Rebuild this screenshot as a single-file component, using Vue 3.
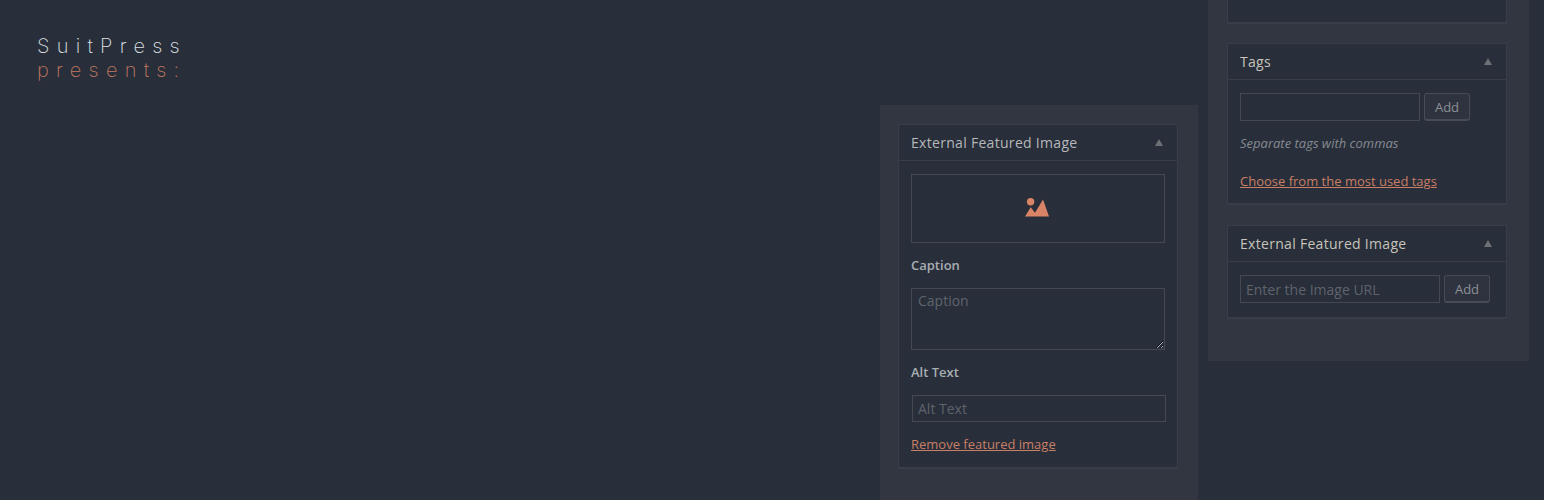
<template>
  <div class="page">
    <div class="logo">
      <div class="logo-name">SuitPress</div>
      <div class="logo-sub">presents:</div>
    </div>

    <section class="panel panel-left">
      <div class="box">
        <div class="box-head head-muted">
          <span>External Featured Image</span>
          <i class="caret"></i>
        </div>
        <div class="box-body">
          <div class="image-slot">
            <svg width="24" height="19" viewBox="0 0 24 19" class="pic">
              <circle cx="5.6" cy="3.8" r="3.7" fill="#d98466" />
              <path d="M0 18.6 L5.7 9.2 L10 14.8 L18 1.5 L24 18.6 Z" fill="#d98466" />
            </svg>
          </div>
          <label class="field-label first">Caption</label>
          <textarea class="area" placeholder="Caption"></textarea>
          <label class="field-label second">Alt Text</label>
          <input class="input alt" placeholder="Alt Text" />
          <a class="link remove">Remove featured image</a>
        </div>
      </div>
    </section>

    <section class="panel panel-right">
      <div class="box box-stub"></div>

      <div class="box">
        <div class="box-head">
          <span>Tags</span>
          <i class="caret"></i>
        </div>
        <div class="box-body body-tags">
          <div class="row">
            <input class="input tag-input" />
            <button class="btn">Add</button>
          </div>
          <p class="hint">Separate tags with commas</p>
          <a class="link choose">Choose from the most used tags</a>
        </div>
      </div>

      <div class="box">
        <div class="box-head">
          <span>External Featured Image</span>
          <i class="caret"></i>
        </div>
        <div class="box-body">
          <div class="row">
            <input class="input url-input" placeholder="Enter the Image URL" />
            <button class="btn">Add</button>
          </div>
        </div>
      </div>
    </section>
  </div>
</template>

<script setup>
</script>

<style>
html, body { margin: 0; background: #282e3a; }
</style>

<style scoped>
.page {
  display: flex;
  align-items: flex-start;
  height: 500px;
  overflow: hidden;
  background: #282e3a;
  font-family: "Open Sans", sans-serif;
  color: #b4b9be;
  box-sizing: border-box;
}
.logo {
  flex: 1;
  padding: 34px 0 0 37px;
  font-family: Inter, sans-serif;
  font-weight: 200;
  font-size: 20px;
  line-height: 24px;
  letter-spacing: 7.25px;
}
.logo-name { color: #dfe1e5; }
.logo-sub { color: #c27861; }

.panel {
  background: #323641;
  box-sizing: border-box;
  display: flex;
  flex-direction: column;
}
.panel-left {
  width: 318px;
  height: 395px;
  margin-top: 105px;
  padding: 19px 20px 0 18px;
}
.panel-right {
  width: 321px;
  height: 361px;
  margin: 0 15px 0 10px;
  padding: 0 22px 0 19px;
  gap: 20px;
}
.box {
  background: #282e3a;
  border: 1px solid #393d49;
  border-bottom-width: 2px;
  box-sizing: border-box;
}
.box-stub {
  height: 24px;
  border-top: 0;
  margin-bottom: -1px;
}
.box-head {
  height: 36px;
  box-sizing: border-box;
  border-bottom: 1px solid #393d49;
  padding: 0 14px 0 12px;
  display: flex;
  align-items: center;
  justify-content: space-between;
  font-size: 14px;
  font-weight: 500;
  letter-spacing: 0.3px;
  color: #c6c4ba;
}
.head-muted { color: #b6b8ba; }
.caret {
  width: 0;
  height: 0;
  border-left: 4.5px solid transparent;
  border-right: 4.5px solid transparent;
  border-bottom: 7px solid #6d7074;
}
.box-body {
  padding: 13px 12px 14px;
  display: flex;
  flex-direction: column;
  align-items: flex-start;
}
.body-tags { padding-bottom: 13px; }
.image-slot {
  width: 254px;
  height: 69px;
  box-sizing: border-box;
  border: 1px solid #444853;
  display: flex;
  align-items: center;
  justify-content: center;
}
.pic { display: block; margin: 0 2px 3px 0; }
.field-label {
  font-size: 13px;
  line-height: 18px;
  font-weight: 600;
  color: #a8adb2;
}
.field-label.first { margin-top: 13px; }
.field-label.second { margin-top: 13px; }
.area {
  width: 254px;
  height: 62px;
  box-sizing: border-box;
  margin: 14px 0 0;
  padding: 2px 6px;
  display: block;
  background: transparent;
  border: 1px solid #444853;
  border-radius: 0;
  font: 14px/20px "Open Sans", sans-serif;
  color: #b4b9be;
  outline: none;
}
.input {
  height: 28px;
  box-sizing: border-box;
  margin: 0;
  padding: 0 5px;
  background: transparent;
  border: 1px solid #444853;
  border-radius: 0;
  font: 14px "Open Sans", sans-serif;
  color: #b4b9be;
  outline: none;
}
.area::placeholder, .input::placeholder { color: #5f636b; opacity: 1; }
.alt {
  width: 254px;
  height: 27px;
  margin: 14px 0 0 1px;
}
.link {
  font-size: 13px;
  line-height: 18px;
  color: #c97f65;
  text-decoration: underline;
}
.remove { margin-top: 13px; }
.row {
  display: flex;
  gap: 4px;
}
.tag-input { width: 180px; }
.url-input { width: 200px; }
.btn {
  width: 46px;
  height: 28px;
  box-sizing: border-box;
  padding: 0;
  background: #2e333f;
  border: 1px solid #474b56;
  border-bottom-width: 2px;
  border-radius: 3px;
  font: 13px "Open Sans", sans-serif;
  color: #8d9196;
}
.hint {
  margin: 13px 0 0;
  font-size: 13px;
  line-height: 18px;
  font-style: italic;
  color: #868b91;
}
.choose { margin-top: 20px; }
</style>
